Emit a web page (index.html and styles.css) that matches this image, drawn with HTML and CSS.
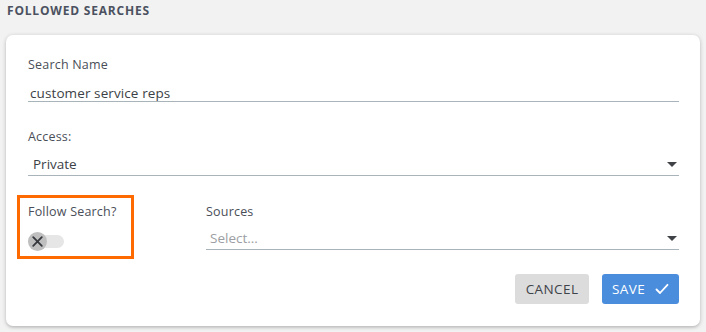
FILE: index.html
```html
<!DOCTYPE html>
<html>
<head>
<meta charset="utf-8">
<link rel="stylesheet" href="styles.css">
</head>
<body>
<h2 class="page-title">FOLLOWED SEARCHES</h2>
<div class="card">
  <div class="field">
    <div class="label">Search Name</div>
    <div class="input">customer service reps</div>
  </div>
  <div class="field field-access">
    <div class="label">Access:</div>
    <div class="select"><span class="select-value">Private</span><span class="caret"></span></div>
  </div>
  <div class="row">
    <div class="follow">
      <div class="label">Follow Search?</div>
      <div class="toggle">
        <div class="track"></div>
        <div class="knob">
          <svg width="19" height="19" viewBox="0 0 19 19"><path d="M5.2 5.2 L13.8 13.8 M13.8 5.2 L5.2 13.8" stroke="#35383d" stroke-width="1.8" stroke-linecap="round" fill="none"/></svg>
        </div>
      </div>
    </div>
    <div class="sources">
      <div class="label">Sources</div>
      <div class="select select-sources"><span class="placeholder">Select...</span><span class="caret"></span></div>
    </div>
  </div>
  <div class="actions">
    <button class="btn btn-cancel">CANCEL</button>
    <button class="btn btn-save">SAVE
      <svg width="14" height="12" viewBox="0 0 14 12"><path d="M1.5 6.5 L5 10 L12.5 1.8" stroke="#fff" stroke-width="1.8" fill="none" stroke-linecap="round" stroke-linejoin="round"/></svg>
    </button>
  </div>
</div>
</body>
</html>
```
FILE: styles.css
```css
html, body {
  margin: 0;
  padding: 0;
}
body {
  background: #f2f2f2;
  font-family: "Open Sans", "Noto Sans", sans-serif;
  color: #4a4e58;
  width: 706px;
  height: 332px;
  overflow: hidden;
}
.page-title {
  margin: 0;
  padding: 3px 7px 0;
  height: 32px;
  font-size: 12px;
  line-height: 16px;
  font-weight: 700;
  color: #4b5160;
  letter-spacing: 0.8px;
}
.card {
  margin: 0 6px;
  background: #fff;
  border-radius: 7px;
  box-shadow: 0 1px 4px rgba(0, 0, 0, 0.22), 0 2px 2px rgba(0,0,0,0.06);
  padding: 22px 21px 22px 22px;
  height: 247px;
}
.label {
  font-size: 12.5px;
  line-height: 16px;
  color: #4a4e58;
  letter-spacing: 0.2px;
}
.input {
  margin-top: 12px;
  font-size: 13.5px;
  line-height: 16px;
  color: #3c3f45;
  padding-left: 2px;
  letter-spacing: 0.1px;
  border-bottom: 1px solid #a9b3ba;
}
.field-access {
  margin-top: 27px;
}
.select {
  margin-top: 10px;
  display: flex;
  align-items: center;
  justify-content: space-between;
  height: 18px;
  padding: 0 2px 2px 5px;
  border-bottom: 1px solid #a9b3ba;
  font-size: 13.5px;
  color: #3c3f45;
}
.caret {
  width: 0;
  height: 0;
  border-left: 5px solid transparent;
  border-right: 5px solid transparent;
  border-top: 5px solid #3f4247;
}
.row {
  display: flex;
  margin-top: 28px;
}
.follow {
  box-sizing: border-box;
  width: 117px;
  margin: -9px 0 0 -11px;
  padding: 6px 8px 6px 8px;
  border: 3px solid #ff6a00;
}
.toggle {
  position: relative;
  margin-top: 12px;
  height: 18px;
  width: 36px;
}
.track {
  position: absolute;
  left: 0;
  top: 3px;
  width: 36px;
  height: 13px;
  border-radius: 7px;
  background: #e6e6e6;
}
.knob {
  position: absolute;
  left: 0;
  top: -0.5px;
  width: 19px;
  height: 19px;
  border-radius: 50%;
  background: #bfbfbf;
}
.knob svg {
  display: block;
}
.sources {
  flex: 1;
  margin-left: 72px;
}
.select-sources {
  margin-top: 9px;
  padding-left: 4px;
}
.placeholder {
  color: #9c9ea3;
  font-size: 13.5px;
}
.actions {
  display: flex;
  justify-content: flex-end;
  gap: 13px;
  margin-top: 15px;
}
.btn {
  height: 30px;
  border: none;
  border-radius: 3px;
  font-family: "Open Sans", "Noto Sans", sans-serif;
  font-size: 13.5px;
  letter-spacing: 0.4px;
  padding: 0;
  display: flex;
  align-items: center;
  justify-content: center;
}
.btn-cancel {
  width: 74px;
  background: #dcdcdc;
  color: #3f434a;
}
.btn-save {
  width: 77px;
  background: #4a8ddd;
  color: #fff;
  gap: 10px;
}
```
